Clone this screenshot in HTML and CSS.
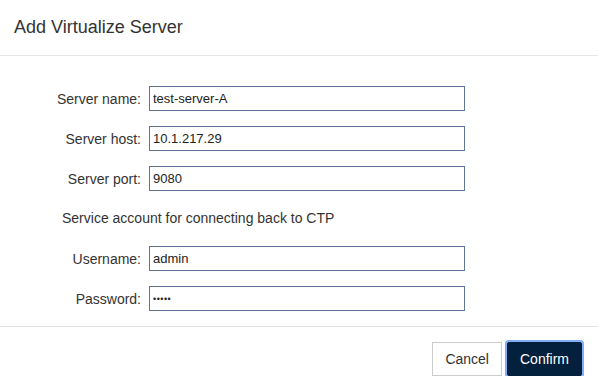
FILE: index.html
```html
<!DOCTYPE html>
<html lang="en">
<head>
  <meta charset="UTF-8" />
  <title>Add Virtualize Server</title>
  <link rel="stylesheet" href="styles.css">
</head>
<body>
  <div class="dialog">
    <header class="dialog-header">
      <h1>Add Virtualize Server</h1>
    </header>

    <main class="dialog-body">
      <div class="form-row">
        <label for="serverName">Server name:</label>
        <input type="text" id="serverName" value="test-server-A" />
      </div>
      <div class="form-row">
        <label for="serverHost">Server host:</label>
        <input type="text" id="serverHost" value="10.1.217.29" />
      </div>
      <div class="form-row">
        <label for="serverPort">Server port:</label>
        <input type="text" id="serverPort" value="9080" />
      </div>

      <p class="section-note">Service account for connecting back to CTP</p>

      <div class="form-row">
        <label for="username">Username:</label>
        <input type="text" id="username" value="admin" />
      </div>
      <div class="form-row">
        <label for="password">Password:</label>
        <input type="password" id="password" class="secret" value="admin" />
      </div>
    </main>

    <footer class="dialog-footer">
      <button class="btn">Cancel</button>
      <button class="btn primary">Confirm</button>
    </footer>
  </div>
</body>
</html>
```

FILE: styles.css
```css
/* Global Styles */
* {
  margin: 0;
  padding: 0;
  box-sizing: border-box;
  font-family: 'Liberation Sans', Arial, sans-serif;
}

body {
  background: #ffffff;
  color: #333;
  font-size: 14px;
}

/* Header */
.dialog-header {
  height: 56px;
  padding: 0 14px;
  display: flex;
  align-items: center;
  border-bottom: 1px solid #e5e5e5;
}

.dialog-header h1 {
  font-size: 18px;
  font-weight: normal;
  color: #333;
}

/* Form */
.dialog-body {
  padding: 30px 0 15px;
  display: flex;
  flex-direction: column;
  gap: 15px;
  border-bottom: 1px solid #e5e5e5;
}

.form-row {
  display: flex;
  align-items: center;
  height: 25px;
}

.form-row label {
  width: 149px;
  padding-right: 8px;
  text-align: right;
  color: #333;
}

.form-row input {
  width: 316px;
  height: 25px;
  padding: 0 3px;
  font-size: 13px;
  color: #222;
  border: 1px solid #5f7597;
  outline: none;
}

.form-row input.secret {
  font-size: 9px;
  letter-spacing: 0.5px;
}

.section-note {
  height: 25px;
  line-height: 25px;
  padding-left: 62px;
  color: #333;
}

/* Footer */
.dialog-footer {
  display: flex;
  justify-content: flex-end;
  gap: 5px;
  padding: 15px 16px 0 0;
}

.btn {
  height: 34px;
  padding: 0 12px;
  font-size: 14px;
  color: #333;
  background-color: #fff;
  border: 1px solid #cccccc;
  cursor: pointer;
}

.btn.primary {
  color: #fff;
  background-color: #03203c;
  border-color: #03203c;
  border-radius: 2px;
  box-shadow: 0 0 0 2px #80aef8;
}
```
